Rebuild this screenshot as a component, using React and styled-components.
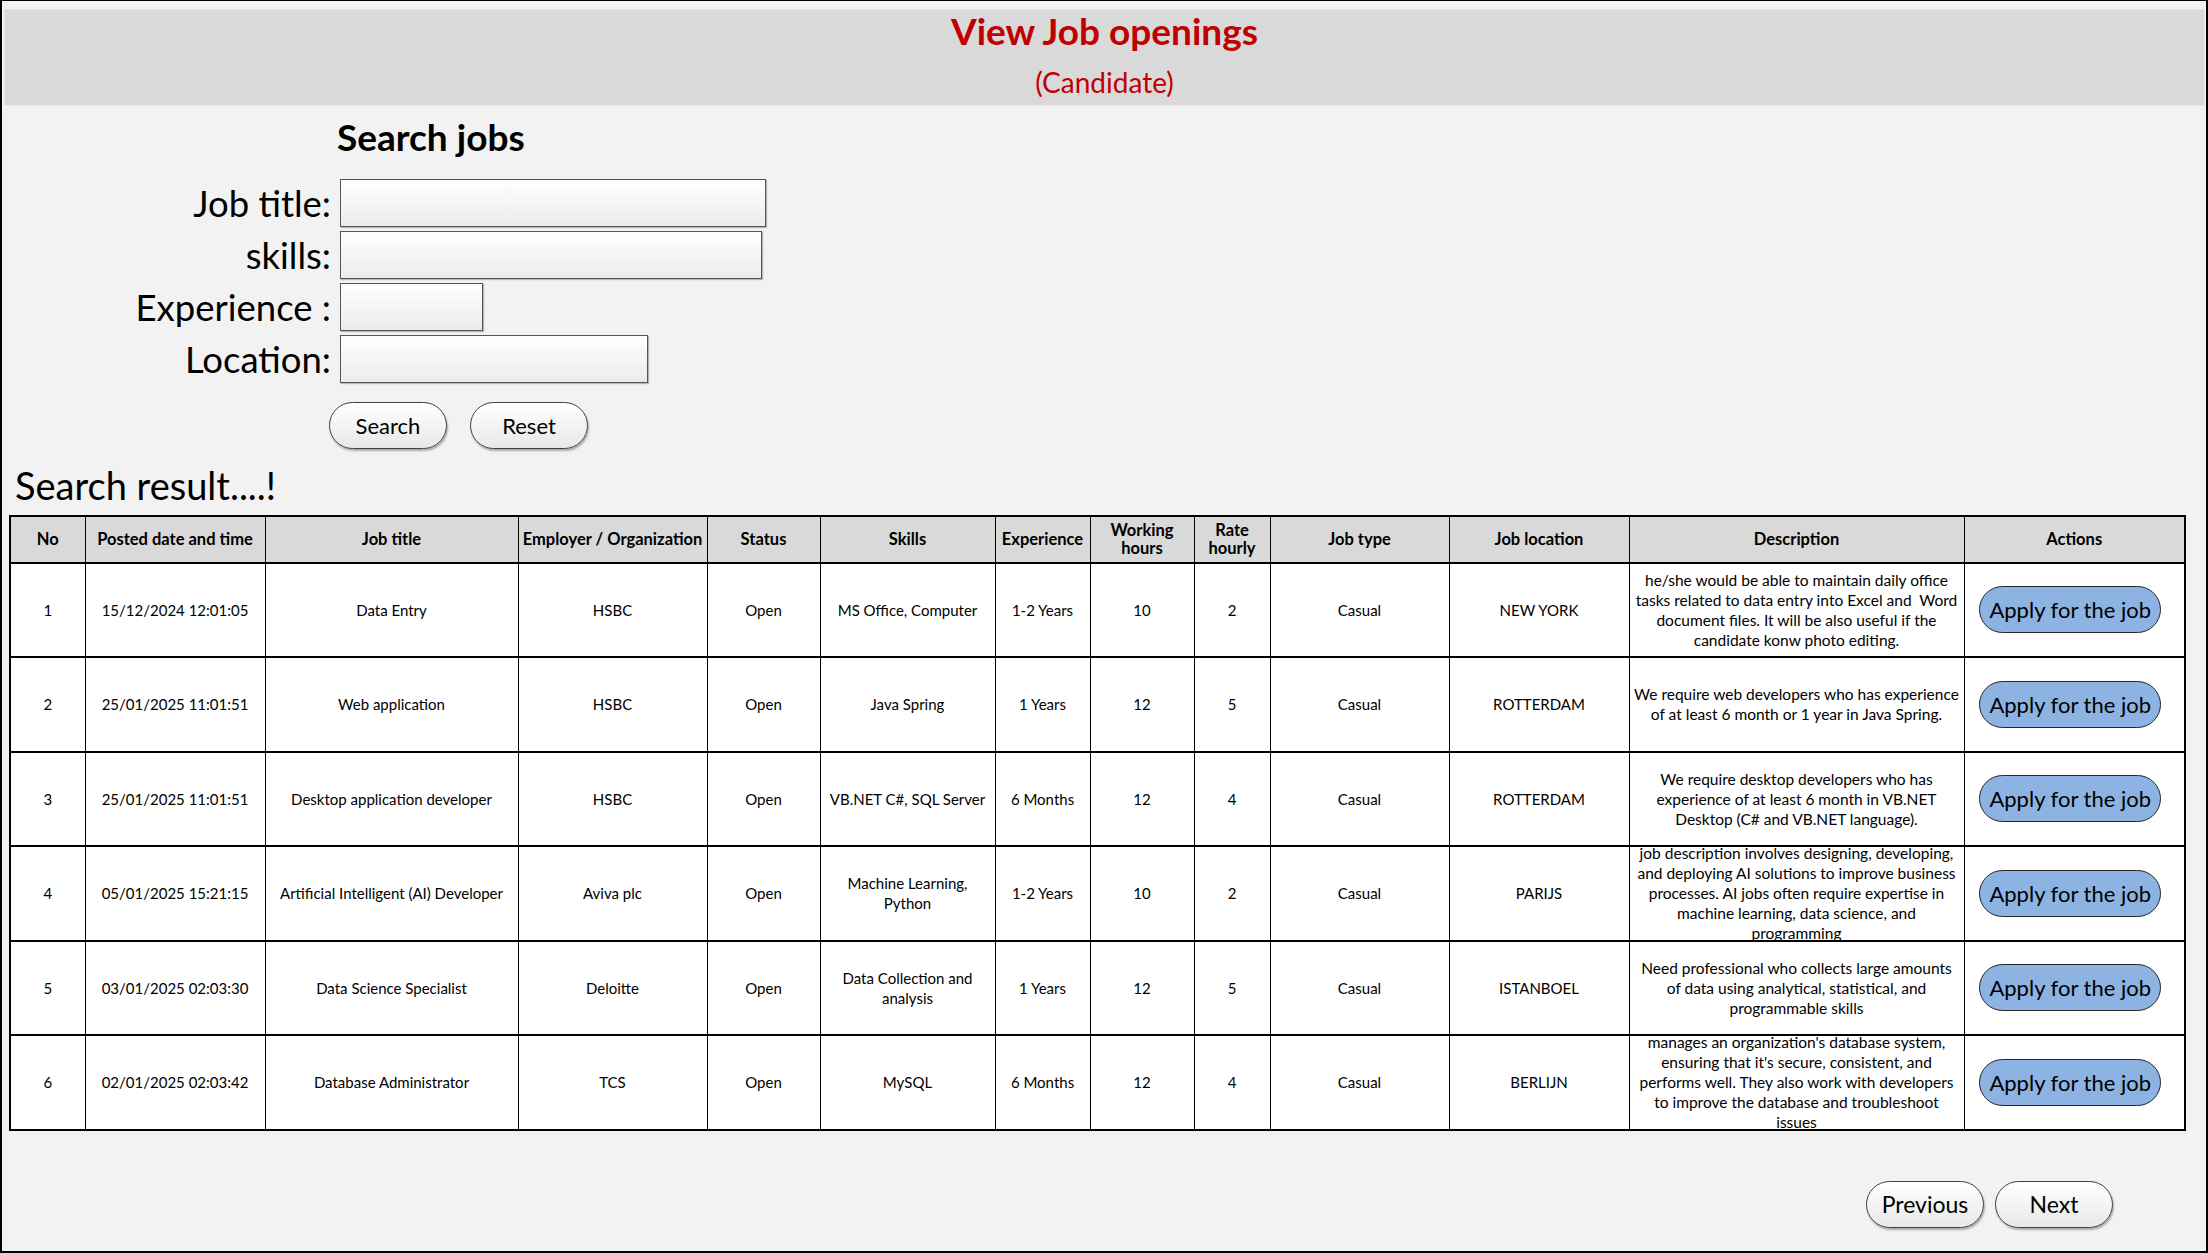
import React from 'react';
import styled, { createGlobalStyle } from 'styled-components';

const GlobalStyle = createGlobalStyle`
  html, body { margin: 0; padding: 0; background: #f2f2f2; }
  body { font-family: Lato, "Open Sans", sans-serif; color: #000; }
  * { box-sizing: border-box; }
`;

const Frame = styled.div`
  width: 2208px;
  height: 1253px;
  border: 2px solid #000;
  border-top-width: 1px;
  background: #f2f2f2;
  display: flex;
  flex-direction: column;
  overflow: hidden;
`;

const Header = styled.header`
  margin: 8px 1px 0 2px;
  height: 97px;
  background: #d9d9d9;
  border: 1px solid #e6e6e6;
  display: flex;
  flex-direction: column;
  align-items: center;
`;

const Title = styled.h1`
  margin: 0;
  font-size: 37px;
  line-height: 42px;
  font-weight: 700;
  color: #c00000;
`;

const Subtitle = styled.div`
  margin-top: 15px;
  font-size: 28px;
  line-height: 31px;
  color: #c00000;
`;

const SearchHeading = styled.h2`
  margin: 10px 0 0 335px;
  font-size: 37px;
  line-height: 41px;
  font-weight: 700;
`;

const FormGrid = styled.div`
  display: grid;
  grid-template-columns: 329px auto;
  column-gap: 9px;
  row-gap: 4px;
  align-items: center;
  margin-top: 22px;
`;

const Label = styled.label`
  justify-self: end;
  font-size: 36.5px;
  line-height: 48px;
  white-space: nowrap;
`;

const TextBox = styled.input`
  width: ${(p) => p.$w}px;
  height: 48px;
  border: 1px solid #555;
  background: linear-gradient(#ffffff, #ebebeb);
  box-shadow: 1px 1px 1px rgba(0, 0, 0, 0.25);
  font-family: inherit;
  font-size: 20px;
  padding: 0 8px;
  outline: none;
`;

const ButtonRow = styled.div`
  display: flex;
  gap: ${(p) => p.$gap}px;
  margin: ${(p) => p.$margin};
  justify-content: ${(p) => p.$justify || 'flex-start'};
`;

const PillButton = styled.button`
  width: 118px;
  height: 47px;
  padding: 0;
  border-radius: 24px;
  border: 1px solid #404040;
  background: linear-gradient(#ffffff, #e8e8e8);
  box-shadow: 1px 2px 2px rgba(0, 0, 0, 0.3);
  font-family: Lato, sans-serif;
  font-size: ${(p) => p.$fs || 22}px;
  color: #000;
`;

const ResultHeading = styled.h3`
  margin: 14px 0 0 13px;
  font-size: 38px;
  line-height: 44px;
  font-weight: 400;
`;

const Table = styled.table`
  margin: 8px 0 0 7px;
  width: 2175px;
  border-collapse: collapse;
  table-layout: fixed;
  background: #fff;
  border: 2px solid #000;
`;

const Th = styled.th`
  padding: 0;
  background: #d9d9d9;
  border-left: 1px solid #000;
  border-right: 1px solid #000;
  border-top: 2px solid #000;
  border-bottom: 2px solid #000;
  font-size: 16.5px;
  line-height: 18px;
  font-weight: 700;
`;

const Td = styled.td`
  padding: 0;
  border-left: 1px solid #000;
  border-right: 1px solid #000;
  border-top: 2px solid #000;
  border-bottom: 2px solid #000;
  font-size: ${(p) => p.$fs || 15}px;
  line-height: 20px;
  vertical-align: middle;
`;

const CellBox = styled.div`
  height: ${(p) => p.$h}px;
  display: flex;
  flex-direction: column;
  align-items: center;
  justify-content: center;
  text-align: center;
  overflow: visible;
  padding: 0 4px;
`;

const Line = styled.span`
  display: block;
  white-space: nowrap;
`;

const ApplyButton = styled.button`
  width: 182px;
  height: 47px;
  margin-right: 8px;
  padding: 0;
  border-radius: 24px;
  border: 1.5px solid #262626;
  background: #8db3e2;
  font-family: Lato, sans-serif;
  font-size: 22px;
  color: #000;
`;

const cols = [75, 180, 253, 189, 113, 175, 95, 104, 76, 179, 180, 335, 221];

const headers = [
  ['No'],
  ['Posted date and time'],
  ['Job title'],
  ['Employer / Organization'],
  ['Status'],
  ['Skills'],
  ['Experience'],
  ['Working', 'hours'],
  ['Rate', 'hourly'],
  ['Job type'],
  ['Job location'],
  ['Description'],
  ['Actions'],
];

const jobs = [
  {
    no: '1', posted: '15/12/2024 12:01:05', title: 'Data Entry', org: 'HSBC', status: 'Open',
    skills: ['MS Office, Computer'], exp: '1-2 Years', hours: '10', rate: '2', type: 'Casual', loc: 'NEW YORK',
    desc: [
      'he/she would be able to maintain daily office',
      'tasks related to data entry into Excel and\u00a0 Word',
      'document files. It will be also useful if the',
      'candidate konw photo editing.',
    ],
  },
  {
    no: '2', posted: '25/01/2025 11:01:51', title: 'Web application', org: 'HSBC', status: 'Open',
    skills: ['Java Spring'], exp: '1 Years', hours: '12', rate: '5', type: 'Casual', loc: 'ROTTERDAM',
    desc: [
      'We require web developers who has experience',
      'of at least 6 month or 1 year in Java Spring.',
    ],
  },
  {
    no: '3', posted: '25/01/2025 11:01:51', title: 'Desktop application developer', org: 'HSBC', status: 'Open',
    skills: ['VB.NET C#, SQL Server'], exp: '6 Months', hours: '12', rate: '4', type: 'Casual', loc: 'ROTTERDAM',
    desc: [
      'We require desktop developers who has',
      'experience of at least 6 month in VB.NET',
      'Desktop (C# and VB.NET language).',
    ],
  },
  {
    no: '4', posted: '05/01/2025 15:21:15', title: 'Artificial Intelligent (AI) Developer', org: 'Aviva plc', status: 'Open',
    skills: ['Machine Learning,', 'Python'], exp: '1-2 Years', hours: '10', rate: '2', type: 'Casual', loc: 'PARIJS',
    desc: [
      'job description involves designing, developing,',
      'and deploying AI solutions to improve business',
      'processes. AI jobs often require expertise in',
      'machine learning, data science, and',
      'programming',
    ],
  },
  {
    no: '5', posted: '03/01/2025 02:03:30', title: 'Data Science Specialist', org: 'Deloitte', status: 'Open',
    skills: ['Data Collection and', 'analysis'], exp: '1 Years', hours: '12', rate: '5', type: 'Casual', loc: 'ISTANBOEL',
    desc: [
      'Need professional who collects large amounts',
      'of data using analytical, statistical, and',
      'programmable skills',
    ],
  },
  {
    no: '6', posted: '02/01/2025 02:03:42', title: 'Database Administrator', org: 'TCS', status: 'Open',
    skills: ['MySQL'], exp: '6 Months', hours: '12', rate: '4', type: 'Casual', loc: 'BERLIJN',
    desc: [
      "manages an organization's database system,",
      "ensuring that it's secure, consistent, and",
      'performs well. They also work with developers',
      'to improve the database and troubleshoot',
      'issues',
    ],
  },
];

const Lines = ({ items }) => items.map((t, i) => <Line key={i}>{t}</Line>);

export default function App() {
  return (
    <>
      <GlobalStyle />
      <Frame>
        <Header>
          <Title>View Job openings</Title>
          <Subtitle>(Candidate)</Subtitle>
        </Header>

        <SearchHeading>Search jobs</SearchHeading>
        <FormGrid>
          <Label>Job title:</Label>
          <TextBox $w={426} />
          <Label>skills:</Label>
          <TextBox $w={422} />
          <Label>Experience :</Label>
          <TextBox $w={143} />
          <Label>Location:</Label>
          <TextBox $w={308} />
        </FormGrid>
        <ButtonRow $gap={23} $margin="19px 0 0 327px">
          <PillButton>Search</PillButton>
          <PillButton>Reset</PillButton>
        </ButtonRow>

        <ResultHeading>Search result....!</ResultHeading>
        <Table>
          <colgroup>
            {cols.map((w, i) => (
              <col key={i} style={{ width: w }} />
            ))}
          </colgroup>
          <thead>
            <tr>
              {headers.map((h, i) => (
                <Th key={i}>
                  <CellBox $h={44.5}>
                    <Lines items={h} />
                  </CellBox>
                </Th>
              ))}
            </tr>
          </thead>
          <tbody>
            {jobs.map((j) => (
              <tr key={j.no}>
                <Td><CellBox $h={92.5}>{j.no}</CellBox></Td>
                <Td><CellBox $h={92.5}>{j.posted}</CellBox></Td>
                <Td><CellBox $h={92.5}>{j.title}</CellBox></Td>
                <Td><CellBox $h={92.5}>{j.org}</CellBox></Td>
                <Td><CellBox $h={92.5}>{j.status}</CellBox></Td>
                <Td><CellBox $h={92.5}><Lines items={j.skills} /></CellBox></Td>
                <Td><CellBox $h={92.5}>{j.exp}</CellBox></Td>
                <Td><CellBox $h={92.5}>{j.hours}</CellBox></Td>
                <Td><CellBox $h={92.5}>{j.rate}</CellBox></Td>
                <Td><CellBox $h={92.5}>{j.type}</CellBox></Td>
                <Td><CellBox $h={92.5}>{j.loc}</CellBox></Td>
                <Td $fs={15.5}><CellBox $h={92.5}><Lines items={j.desc} /></CellBox></Td>
                <Td><CellBox $h={92.5}><ApplyButton>Apply for the job</ApplyButton></CellBox></Td>
              </tr>
            ))}
          </tbody>
        </Table>

        <ButtonRow $gap={11} $margin="50px 93px 0 0" $justify="flex-end">
          <PillButton $fs={23}>Previous</PillButton>
          <PillButton $fs={23}>Next</PillButton>
        </ButtonRow>
      </Frame>
    </>
  );
}
